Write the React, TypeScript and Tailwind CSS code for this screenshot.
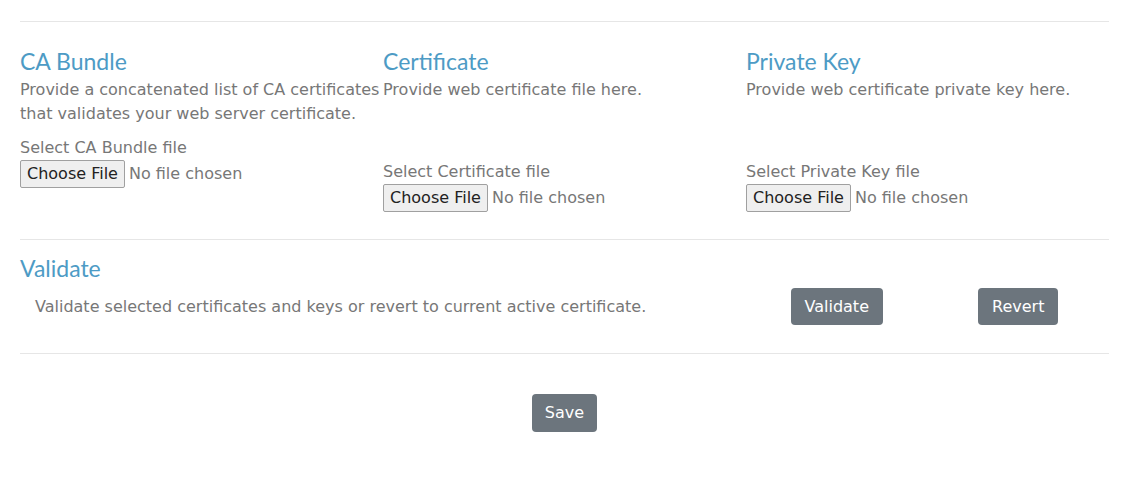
import React from 'react';

const body = { fontFamily: '"DejaVu Sans", "Noto Sans", sans-serif' };
const head = { fontFamily: 'Lato, "Open Sans", sans-serif' };

interface FileColumnProps {
  title: string;
  description: React.ReactNode;
  label: string;
  descClass: string;
}

function FilePicker() {
  return (
    <div className="flex items-center h-[28px]">
      <span className="h-[28px] px-[6px] flex items-center border border-[#a0a0a0] bg-[#efefef] text-[#222] text-[16px] rounded-[2px]">
        Choose File
      </span>
      <span className="ml-[4px] text-[16px] text-[#777]">No file chosen</span>
    </div>
  );
}

function FileColumn({ title, description, label, descClass }: FileColumnProps) {
  return (
    <div>
      <h3 className="text-[23px] leading-[30px] text-[#4d9bc5]" style={head}>{title}</h3>
      <p className={`mt-[2px] text-[16px] leading-[24px] text-[#777] ${descClass}`}>{description}</p>
      <div className="mt-[10px] text-[16px] leading-[24px] text-[#777]">{label}</div>
      <FilePicker />
    </div>
  );
}

function GrayButton({ children }: { children: React.ReactNode }) {
  return (
    <button className="h-[37px] px-[14px] rounded-[4px] bg-[#6c757d] text-white text-[16px] font-medium">
      {children}
    </button>
  );
}

export default function App() {
  return (
    <div className="bg-white min-h-screen pl-[20px] pr-[22px] pt-[21px]" style={body}>
      <div className="border-t border-[#e6e6e6]" />

      <div className="grid grid-cols-3 mt-[24px] pb-[27px] border-b border-[#e6e6e6]">
        <FileColumn
          title="CA Bundle"
          description={<>Provide a concatenated list of CA certificates<br />that validates your web server certificate.</>}
          label="Select CA Bundle file"
          descClass="h-[48px] whitespace-nowrap"
        />
        <FileColumn
          title="Certificate"
          description="Provide web certificate file here."
          label="Select Certificate file"
          descClass="h-[72px]"
        />
        <FileColumn
          title="Private Key"
          description="Provide web certificate private key here."
          label="Select Private Key file"
          descClass="h-[72px]"
        />
      </div>

      <div className="pt-[13px] pb-[28px] border-b border-[#e6e6e6]">
        <h3 className="text-[23px] leading-[30px] text-[#4d9bc5]" style={head}>Validate</h3>
        <div className="grid grid-cols-12 items-center mt-[5px]">
          <p className="col-span-8 pl-[15px] text-[16px] text-[#777]">
            Validate selected certificates and keys or revert to current active certificate.
          </p>
          <div className="col-span-2 flex justify-center">
            <GrayButton>Validate</GrayButton>
          </div>
          <div className="col-span-2 flex justify-center">
            <GrayButton>Revert</GrayButton>
          </div>
        </div>
      </div>

      <div className="flex justify-center mt-[40px]">
        <button className="h-[38px] px-[13px] rounded-[4px] bg-[#6c757d] text-white text-[16px] font-medium">
          Save
        </button>
      </div>
    </div>
  );
}
